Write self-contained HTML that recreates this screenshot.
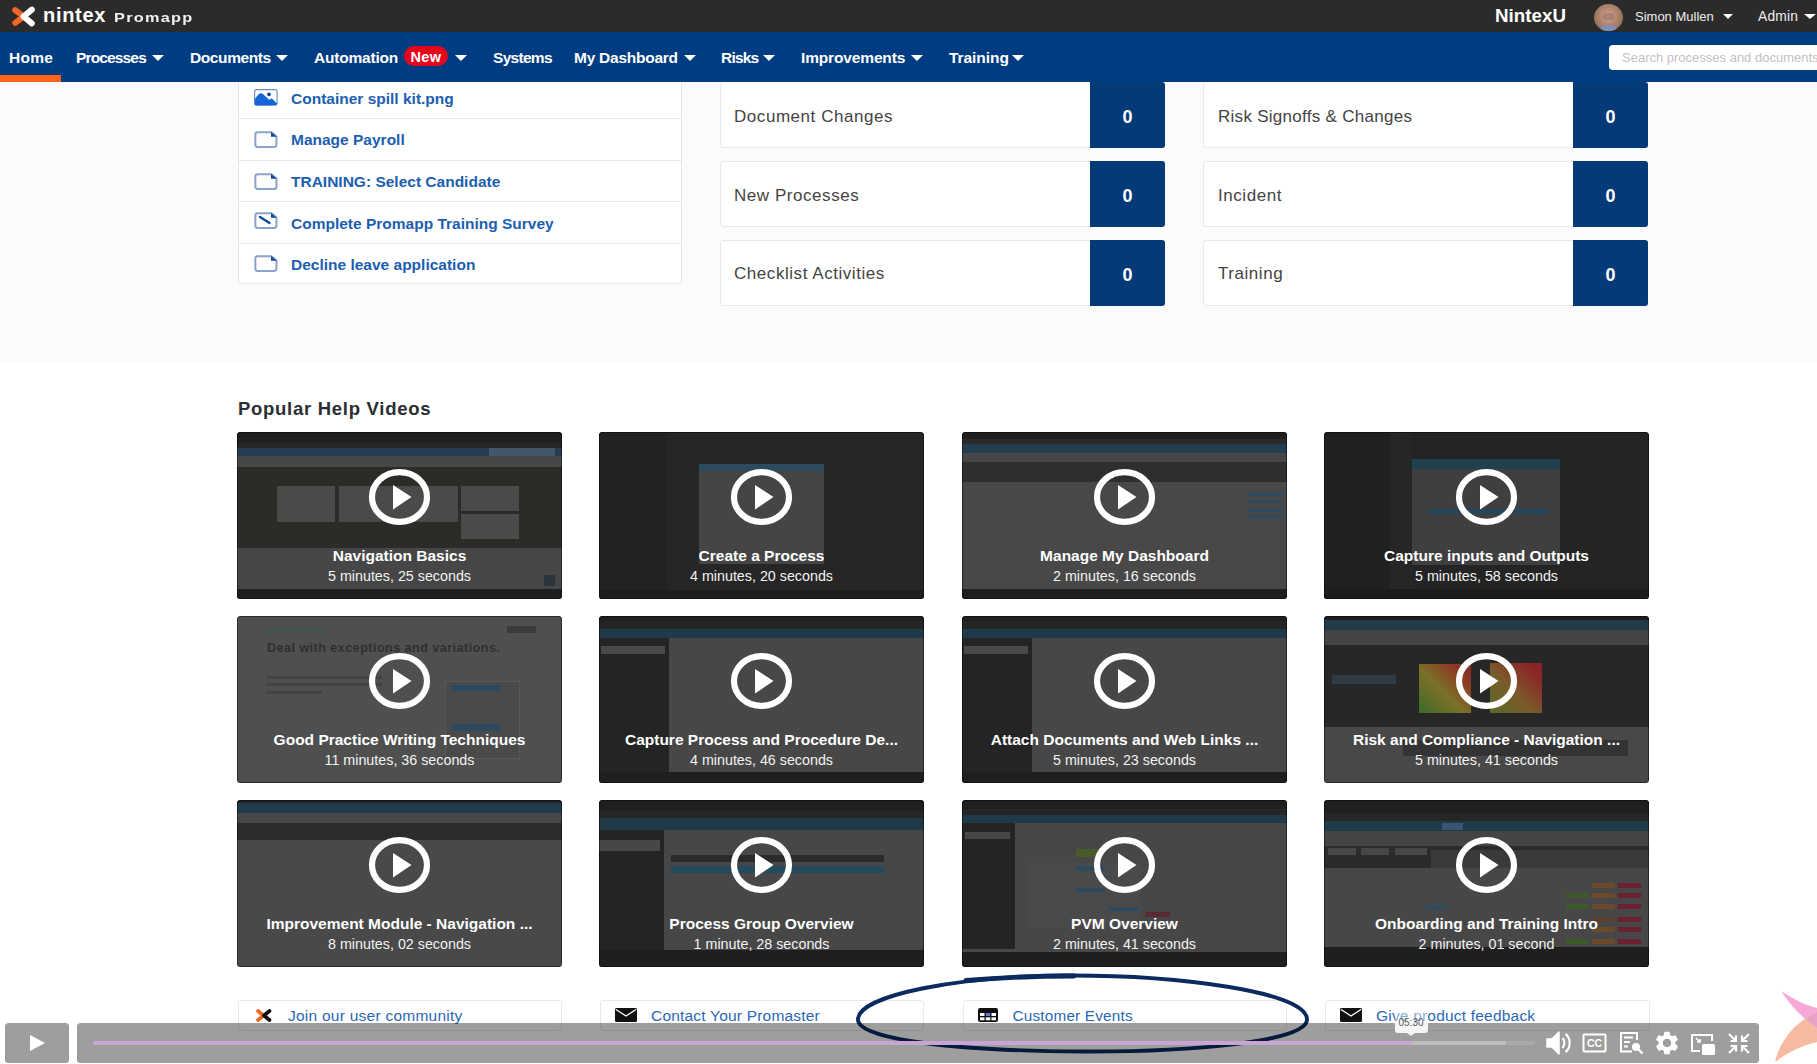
<!DOCTYPE html>
<html><head><meta charset="utf-8">
<style>
*{box-sizing:border-box}
html,body{margin:0;padding:0}
body{width:1817px;height:1064px;overflow:hidden;position:relative;background:#fff;font-family:"Liberation Sans",sans-serif}
.a{position:absolute}
.t{position:absolute;white-space:nowrap;line-height:1}
#top{left:0;top:0;width:1817px;height:32px;background:#2b2b2b}
#nav{left:0;top:32px;width:1817px;height:50px;background:#003c82}
#upper{left:0;top:82px;width:1817px;height:280px;background:#fbfafc}
.nv{color:#fff;font-weight:bold;font-size:14.5px}
.car{position:absolute;width:0;height:0;border-left:6px solid transparent;border-right:6px solid transparent;border-top:6.5px solid #fff}
.list{left:238px;top:82px;width:444px;height:202px;background:#fff;border:1px solid #e6e6e9;border-top:none}
.row{position:absolute;left:238px;width:444px;height:1px;background:#e6e6e9}
.li{color:#1c5eb0;font-weight:bold;font-size:15.5px}
.card{position:absolute;width:445px;height:66px;background:#fff;border:1px solid #e9e7ea;border-radius:3px}
.cnt{position:absolute;right:-1px;top:-1px;width:75px;height:66px;background:#053a78;border-radius:0 3px 3px 0;color:#fff;font-weight:bold;font-size:18px;text-align:center;line-height:71px}
.ctx{color:#444;font-size:17px;letter-spacing:0.55px}
.vid{position:absolute;width:325px;height:167px;background:#2a2a2a;border-radius:3.5px;overflow:hidden}
.vid:after{content:"";position:absolute;left:0;top:0;right:0;bottom:0;border-radius:3.5px;box-shadow:inset 0 0 0 1px rgba(0,0,0,0.45)}
.vid .r{position:absolute}
.play{position:absolute;left:132px;top:38px;width:60px;height:55px}
.vt{position:absolute;left:0;width:325px;text-align:center;color:#fff;white-space:nowrap;line-height:1}
.vt1{top:115.5px;font-weight:bold;font-size:15.5px}
.vt2{top:137px;font-size:14.3px;color:#f2f2f2}
.lk{position:absolute;top:1000px;width:325px;height:40px;border:1px solid #ebe8ed;border-radius:3px;background:#fff}
.lkt{color:#2b67b5;font-size:15.5px}
</style></head>
<body>
<div id="top" class="a"></div>
<div id="nav" class="a"></div>
<div id="upper" class="a"></div>

<!-- logo -->
<svg class="a" style="left:11px;top:5px" width="26" height="23" viewBox="-1 -1 28 25">
  <path d="M3.5 4.5 L12.5 11.5 L3.5 18.5" fill="none" stroke="#f26522" stroke-width="6.5" stroke-linecap="round" stroke-linejoin="round"/>
  <path d="M21.5 4 L12.5 11.5 L21.5 19" fill="none" stroke="#fff" stroke-width="6.5" stroke-linecap="round" stroke-linejoin="round"/>
</svg>
<div class="t" style="left:43px;top:4.5px;color:#fff;font-weight:bold;font-size:20px;letter-spacing:0.7px">nintex</div>
<div class="t" style="left:114px;top:11px;color:#f2f2f2;font-weight:bold;font-size:13px;letter-spacing:1px;transform:scaleX(1.255);transform-origin:0 0">Promapp</div>
<!-- top right -->
<div class="t" style="left:1495px;top:7px;color:#fff;font-weight:bold;font-size:18.8px">NintexU</div>
<div class="a" style="left:1594px;top:3.5px;width:29px;height:27.5px;border-radius:50%;overflow:hidden;background:radial-gradient(ellipse at 50% 45%,#d2a898 0,#b88a74 35%,#a07a62 60%,#7a6458 85%,#504540 100%);filter:blur(0.4px)"><div class="a" style="left:9px;top:9px;width:11px;height:7px;border-radius:40%;background:rgba(110,80,70,0.35)"></div><div class="a" style="left:6px;top:21px;width:17px;height:9px;border-radius:50%;background:#7f90b8"></div></div>
<div class="t" style="left:1635px;top:10px;color:#eee;font-size:13px">Simon Mullen</div>
<div class="car" style="left:1723px;top:14px;border-left-width:5px;border-right-width:5px;border-top-width:5px"></div>
<div class="t" style="left:1758px;top:9.7px;color:#eee;font-size:13.8px;letter-spacing:0.2px">Admin</div>
<div class="car" style="left:1804px;top:14px;border-left-width:6px;border-right-width:6px;border-top-width:5px"></div>

<!-- nav -->
<div class="t nv" style="left:9px;top:50px;font-size:15.5px;letter-spacing:0.3px">Home</div>
<div class="a" style="left:0;top:75px;width:61px;height:7px;background:#ff6418"></div>
<div class="t nv" style="left:76px;top:50px;font-size:15.5px;letter-spacing:-0.85px">Processes</div>
<div class="car" style="left:152px;top:54.5px"></div>
<div class="t nv" style="left:190px;top:50px;font-size:15.5px;letter-spacing:-0.4px">Documents</div>
<div class="car" style="left:276px;top:54.5px"></div>
<div class="t nv" style="left:314px;top:50px;font-size:15.5px;letter-spacing:-0.2px">Automation</div>
<div class="a" style="left:404px;top:46px;width:44px;height:20px;border-radius:10px;background:#e4061a"></div>
<div class="t nv" style="left:410.5px;top:49.5px;font-size:14.5px;letter-spacing:0.3px">New</div>
<div class="car" style="left:455px;top:54.5px"></div>
<div class="t nv" style="left:493px;top:50px;font-size:15.5px;letter-spacing:-0.7px">Systems</div>
<div class="t nv" style="left:574px;top:50px;font-size:15.5px;letter-spacing:-0.25px">My Dashboard</div>
<div class="car" style="left:684px;top:54.5px"></div>
<div class="t nv" style="left:721px;top:50px;font-size:15.5px;letter-spacing:-0.8px">Risks</div>
<div class="car" style="left:763px;top:54.5px"></div>
<div class="t nv" style="left:801px;top:50px;font-size:15.5px;letter-spacing:-0.15px">Improvements</div>
<div class="car" style="left:911px;top:54.5px"></div>
<div class="t nv" style="left:949px;top:50px;font-size:15.5px;letter-spacing:-0.05px">Training</div>
<div class="car" style="left:1012px;top:54.5px"></div>
<div class="a" style="left:1609px;top:45px;width:220px;height:25px;background:#fff;border-radius:4px"></div>
<div class="t" style="left:1622px;top:50.5px;color:#c6c0c4;font-size:13px">Search processes and documents</div>

<!-- left list -->
<div class="a list"></div>
<div class="row" style="top:118px"></div>
<div class="row" style="top:160px"></div>
<div class="row" style="top:201px"></div>
<div class="row" style="top:243px"></div>

<svg class="a" style="left:254px;top:89px" width="24" height="17" viewBox="0 0 24 17"><rect x="0.6" y="0.6" width="22.5" height="15.6" rx="1.8" fill="#fff" stroke="#6d8fbf" stroke-width="1.2"/><path d="M0.8 10 L3.5 6.5 Q7 2 10.5 6.5 L15.5 11 Q17.2 8.5 19 10.5 L23 14.5 Q22.8 16.2 20.5 16.2 H2 Q0.8 16.2 0.8 15 Z" fill="#1466d6"/><circle cx="15" cy="5.3" r="1.9" fill="#1d4a8a"/></svg>
<div class="t li" style="left:291px;top:91px">Container spill kit.png</div>
<svg class="a" style="left:254px;top:130.5px" width="24" height="17" viewBox="0 0 24 17"><path d="M3.5 1.25 H17.5 L22.45 5.5 V13.8 Q22.45 15.95 20.3 15.95 H3.5 Q1.35 15.95 1.35 13.8 V3.4 Q1.35 1.25 3.5 1.25 Z" fill="none" stroke="#8aa2cc" stroke-width="2"/><path d="M17 1 L22.8 5.8 L17 5.8 Z" fill="#0b4aa0"/></svg>
<div class="t li" style="left:291px;top:132px">Manage Payroll</div>
<svg class="a" style="left:254px;top:172.5px" width="24" height="17" viewBox="0 0 24 17"><path d="M3.5 1.25 H17.5 L22.45 5.5 V13.8 Q22.45 15.95 20.3 15.95 H3.5 Q1.35 15.95 1.35 13.8 V3.4 Q1.35 1.25 3.5 1.25 Z" fill="none" stroke="#8aa2cc" stroke-width="2"/><path d="M17 1 L22.8 5.8 L17 5.8 Z" fill="#0b4aa0"/></svg>
<div class="t li" style="left:291px;top:174px">TRAINING: Select Candidate</div>
<svg class="a" style="left:254px;top:212px" width="24" height="17" viewBox="0 0 24 17"><path d="M3.5 1.25 H17.5 L22.45 5.5 V13.8 Q22.45 15.95 20.3 15.95 H3.5 Q1.35 15.95 1.35 13.8 V3.4 Q1.35 1.25 3.5 1.25 Z" fill="none" stroke="#8aa2cc" stroke-width="2"/><path d="M17 1 L22.8 5.8 L17 5.8 Z" fill="#0b4aa0"/><path d="M6 5 L15.5 11" stroke="#0d4a9a" stroke-width="2.4" stroke-linecap="round"/></svg>
<div class="t li" style="left:291px;top:216px">Complete Promapp Training Survey</div>
<svg class="a" style="left:254px;top:255px" width="24" height="17" viewBox="0 0 24 17"><path d="M3.5 1.25 H17.5 L22.45 5.5 V13.8 Q22.45 15.95 20.3 15.95 H3.5 Q1.35 15.95 1.35 13.8 V3.4 Q1.35 1.25 3.5 1.25 Z" fill="none" stroke="#8aa2cc" stroke-width="2"/><path d="M17 1 L22.8 5.8 L17 5.8 Z" fill="#0b4aa0"/></svg>
<div class="t li" style="left:291px;top:257px">Decline leave application</div>

<!-- middle cards -->
<div class="card" style="left:720px;top:82px;border-top:none;height:66px"><div class="cnt" style="top:0;height:66px">0</div></div>
<div class="t ctx" style="left:734px;top:107.5px">Document Changes</div>
<div class="card" style="left:720px;top:161px"><div class="cnt">0</div></div>
<div class="t ctx" style="left:734px;top:186.5px">New Processes</div>
<div class="card" style="left:720px;top:240px"><div class="cnt">0</div></div>
<div class="t ctx" style="left:734px;top:265px">Checklist Activities</div>

<div class="card" style="left:1203px;top:82px;border-top:none;height:66px"><div class="cnt" style="top:0;height:66px">0</div></div>
<div class="t ctx" style="left:1218px;top:107.5px;letter-spacing:0.28px">Risk Signoffs &amp; Changes</div>
<div class="card" style="left:1203px;top:161px"><div class="cnt">0</div></div>
<div class="t ctx" style="left:1218px;top:186.5px">Incident</div>
<div class="card" style="left:1203px;top:240px"><div class="cnt">0</div></div>
<div class="t ctx" style="left:1218px;top:265px">Training</div>

<!-- help videos -->
<div class="t" style="left:238px;top:400px;color:#2b2e33;font-weight:bold;font-size:18.5px;letter-spacing:0.72px">Popular Help Videos</div>


<!--BOTTOM-->
<div class="lk" style="left:238px;width:324px;height:31px"></div>
<svg class="a" style="left:255px;top:1008px" width="18" height="15" viewBox="0 0 18 15"><path d="M3 3 L8.5 7.5 L3 12" fill="none" stroke="#f26522" stroke-width="3.6" stroke-linecap="round" stroke-linejoin="round"/><path d="M14.5 3 L9 7.5 L14.5 12" fill="none" stroke="#111" stroke-width="3.6" stroke-linecap="round" stroke-linejoin="round"/></svg>
<div class="t lkt" style="left:288px;top:1008px;font-size:15.5px;letter-spacing:0.25px">Join our user community</div>
<div class="lk" style="left:600px;width:324px;height:31px"></div>
<svg class="a" style="left:615px;top:1008px" width="22" height="14" viewBox="0 0 22 14"><rect x="0" y="0" width="22" height="14" rx="1.5" fill="#111"/><path d="M1 1.5 L11 8 L21 1.5" fill="none" stroke="#fff" stroke-width="1.4"/></svg>
<div class="t lkt" style="left:651px;top:1008px;font-size:15.5px;letter-spacing:0.2px">Contact Your Promaster</div>
<div class="lk" style="left:963px;width:324px;height:31px"></div>
<svg class="a" style="left:978px;top:1008px" width="20" height="14" viewBox="0 0 20 14"><rect x="0" y="0" width="20" height="14" rx="2" fill="#111"/><rect x="2" y="5" width="4.5" height="3" fill="#fff"/><rect x="7.8" y="5" width="4.5" height="3" fill="#5a7fd0"/><rect x="13.5" y="5" width="4.5" height="3" fill="#fff"/><rect x="2" y="9.3" width="4.5" height="3" fill="#fff"/><rect x="7.8" y="9.3" width="4.5" height="3" fill="#fff"/><rect x="13.5" y="9.3" width="4.5" height="3" fill="#fff"/></svg>
<div class="t lkt" style="left:1012.5px;top:1008px;font-size:15.3px;letter-spacing:0.2px">Customer Events</div>
<div class="lk" style="left:1325px;width:325px;height:31px"></div>
<svg class="a" style="left:1340px;top:1008px" width="22" height="14" viewBox="0 0 22 14"><rect x="0" y="0" width="22" height="14" rx="1.5" fill="#111"/><path d="M1 1.5 L11 8 L21 1.5" fill="none" stroke="#fff" stroke-width="1.4"/></svg>
<div class="t lkt" style="left:1376px;top:1008px;font-size:15.5px;letter-spacing:0.2px">Give product feedback</div>

<!-- ellipse annotation -->
<svg class="a" style="left:840px;top:965px" width="480" height="95" viewBox="840 965 480 95">
  <path d="M858 1019.5 C 858 995, 960 976, 1065 975.5 C 1180 975, 1307 992, 1307 1019.4 C 1307 1042, 1190 1052, 1082 1051.5 C 960 1051, 858 1040, 858 1019.5 Z" fill="none" stroke="#0a2a60" stroke-width="3.9"/>
  <path d="M966 980.5 C 1000 977.5, 1040 976, 1074 976" fill="none" stroke="#0a2a60" stroke-width="4.8" stroke-linecap="round"/>
</svg>

<!-- player controls -->
<div class="a" style="left:5px;top:1023px;width:64px;height:40px;border-radius:3.5px;background:rgba(0,0,0,0.38)"></div>
<svg class="a" style="left:29px;top:1034px" width="18" height="18" viewBox="0 0 18 18"><path d="M1 1 L1 17 L16 9Z" fill="#fff"/></svg>
<div class="a" style="left:77px;top:1023px;width:1682px;height:40px;border-radius:3.5px;background:rgba(0,0,0,0.38)"></div>
<div class="a" style="left:93px;top:1041px;width:1442px;height:4px;border-radius:2px;background:#aaaaaa"></div>
<div class="a" style="left:93px;top:1041px;width:1413px;height:4px;border-radius:2px 0 0 2px;background:#bdbdbd"></div>
<div class="a" style="left:93px;top:1041px;width:1319px;height:4px;border-radius:2px 0 0 2px;background:#c9a5d6"></div>
<div class="a" style="left:1395px;top:1023px;width:33px;height:10px;border-radius:0 0 3px 3px;background:rgba(255,255,255,0.9)"></div><div class="a" style="left:1395px;top:1012px;width:33px;height:11px;border-radius:3px 3px 0 0;background:rgba(255,255,255,0.45)"></div>
<svg class="a" style="left:1407px;top:1033px" width="8" height="3" viewBox="0 0 8 3"><path d="M0 0 L8 0 L4 3Z" fill="rgba(255,255,255,0.85)"/></svg>
<div class="t" style="left:1398.5px;top:1018px;font-size:10px;color:#5a5a5a">05:30</div>

<!-- icons -->
<svg class="a" style="left:1545px;top:1030px" width="28" height="26" viewBox="0 0 28 26">
  <path d="M2 9 H7 L14 2 V24 L7 17 H2 Z" fill="#fff" stroke="#fff" stroke-width="1.5" stroke-linejoin="round"/>
  <path d="M17.5 8 C 20 10.5, 20 15.5, 17.5 18" fill="none" stroke="#fff" stroke-width="2.2"/>
  <path d="M20.5 4 C 26 8, 26 18, 20.5 22" fill="none" stroke="#fff" stroke-width="2.2"/>
</svg>
<svg class="a" style="left:1582px;top:1033px" width="26" height="20" viewBox="0 0 26 20">
  <rect x="1.5" y="1.5" width="22" height="17" rx="1" fill="none" stroke="#fff" stroke-width="2"/>
  <text x="12.5" y="14.3" text-anchor="middle" font-family="Liberation Sans" font-weight="bold" font-size="10.5" fill="#fff">CC</text>
</svg>
<svg class="a" style="left:1619px;top:1031px" width="26" height="25" viewBox="0 0 26 25">
  <path d="M13 20.5 H2 V2 H18 V9" fill="none" stroke="#fff" stroke-width="2"/>
  <rect x="5" y="5.5" width="9" height="2" fill="#fff"/><rect x="5" y="10" width="6" height="2" fill="#fff"/><rect x="5" y="14.5" width="4" height="2" fill="#fff"/>
  <circle cx="17" cy="16" r="4" fill="#fff"/><path d="M19.5 18.5 L23.5 22.5" stroke="#fff" stroke-width="2.2"/>
</svg>
<svg class="a" style="left:1653px;top:1029px" width="28" height="28" viewBox="0 0 24 24">
  <path fill="#fff" d="M19.14 12.94c.04-.3.06-.61.06-.94 0-.32-.02-.64-.07-.94l2.03-1.58c.18-.14.23-.41.12-.61l-1.92-3.32c-.12-.22-.37-.29-.59-.22l-2.39.96c-.5-.38-1.03-.7-1.62-.94l-.36-2.54c-.04-.24-.24-.41-.48-.41h-3.84c-.24 0-.43.17-.47.41l-.36 2.54c-.59.24-1.13.57-1.62.94l-2.39-.96c-.22-.08-.47 0-.59.22L2.74 8.87c-.12.21-.08.47.12.61l2.03 1.58c-.05.3-.09.63-.09.94s.02.64.07.94l-2.03 1.58c-.18.14-.23.41-.12.61l1.92 3.32c.12.22.37.29.59.22l2.39-.96c.5.38 1.03.7 1.62.94l.36 2.54c.05.24.24.41.48.41h3.84c.24 0 .44-.17.47-.41l.36-2.54c.59-.24 1.13-.56 1.62-.94l2.39.96c.22.08.47 0 .59-.22l1.92-3.32c.12-.22.07-.47-.12-.61l-2.01-1.58zM12 15.6c-1.98 0-3.6-1.62-3.6-3.6s1.62-3.6 3.6-3.6 3.6 1.62 3.6 3.6-1.62 3.6-3.6 3.6z"/>
</svg>
<svg class="a" style="left:1690px;top:1033px" width="27" height="23" viewBox="0 0 27 23">
  <path d="M10 18 H2 V2 H22 V8" fill="none" stroke="#fff" stroke-width="2"/>
  <rect x="12" y="11" width="13" height="11" rx="1.5" fill="#fff"/>
  <path d="M6 5 L10 9 M10 6 V9 H7" fill="none" stroke="#fff" stroke-width="1.6"/>
</svg>
<svg class="a" style="left:1727px;top:1032px" width="24" height="23" viewBox="0 0 24 23">
  <path d="M2 2 L9 9 M9 3.5 V9 H3.5" fill="none" stroke="#fff" stroke-width="2.2"/>
  <path d="M22 2 L15 9 M15 3.5 V9 H20.5" fill="none" stroke="#fff" stroke-width="2.2"/>
  <path d="M2 21 L9 14 M9 19.5 V14 H3.5" fill="none" stroke="#fff" stroke-width="2.2"/>
  <path d="M22 21 L15 14 M15 19.5 V14 H20.5" fill="none" stroke="#fff" stroke-width="2.2"/>
</svg>

<!-- petal logo -->
<svg class="a" style="left:1770px;top:985px" width="47" height="79" viewBox="1770 985 47 79">
  <path d="M1781 991 C 1795 1000, 1805 1005, 1817 1008 L 1817 1028 C 1805 1020, 1792 1008, 1781 991Z" fill="#f7a8d6"/>
  <path d="M1775 1062 C 1780 1040, 1795 1022, 1817 1012 L 1817 1042 C 1800 1046, 1787 1053, 1775 1062Z" fill="#f6bba0"/>
  <path d="M1806 1019.5 C 1810 1016, 1813 1014, 1817 1012 L 1817 1028 C 1813 1025, 1809 1022, 1806 1019.5Z" fill="#e8a2c8"/>
</svg>
<!--/BOTTOM-->







<!--VIDS-->
<div class="vid" style="left:237px;top:432px;background:#2b2c28"><div class="r" style="left:0px;top:0px;width:325px;height:11px;background:#1f1f1f;"></div><div class="r" style="left:0px;top:11px;width:325px;height:5px;background:#262626;"></div><div class="r" style="left:0px;top:16px;width:325px;height:8px;background:#263c50;"></div><div class="r" style="left:252px;top:16px;width:66px;height:8px;background:#45566a;"></div><div class="r" style="left:0px;top:24px;width:325px;height:11px;background:#474747;"></div><div class="r" style="left:40px;top:54px;width:58px;height:36px;background:#4a4a4a;"></div><div class="r" style="left:102px;top:54px;width:119px;height:36px;background:#4a4a4a;"></div><div class="r" style="left:224px;top:54px;width:58px;height:25px;background:#4a4a4a;"></div><div class="r" style="left:224px;top:82px;width:58px;height:25px;background:#4a4a4a;"></div><div class="r" style="left:0px;top:116px;width:325px;height:41px;background:#464646;"></div><div class="r" style="left:0px;top:157px;width:325px;height:10px;background:#1f1f1f;"></div><div class="r" style="left:307px;top:143px;width:11px;height:11px;background:#2a3540;"></div><svg class="r" style="left:0;top:0" width="325" height="167"><ellipse cx="162.5" cy="65" rx="27.5" ry="24.9" fill="none" stroke="#fff" stroke-width="6.2"/><path d="M156 53 L156 77.5 L174.5 65 Z" fill="#fff"/></svg><div class="vt vt1">Navigation Basics</div><div class="vt vt2">5 minutes, 25 seconds</div></div>
<div class="vid" style="left:599px;top:432px;background:#262626"><div class="r" style="left:0px;top:0px;width:68px;height:167px;background:#222;"></div><div class="r" style="left:100px;top:32px;width:125px;height:100px;background:#454545;"></div><div class="r" style="left:100px;top:32px;width:125px;height:7px;background:#2a4a5e;"></div><div class="r" style="left:0px;top:158px;width:325px;height:9px;background:#1e1e1e;"></div><svg class="r" style="left:0;top:0" width="325" height="167"><ellipse cx="162.5" cy="65" rx="27.5" ry="24.9" fill="none" stroke="#fff" stroke-width="6.2"/><path d="M156 53 L156 77.5 L174.5 65 Z" fill="#fff"/></svg><div class="vt vt1">Create a Process</div><div class="vt vt2">4 minutes, 20 seconds</div></div>
<div class="vid" style="left:962px;top:432px;background:#484848"><div class="r" style="left:0px;top:0px;width:325px;height:7px;background:#1f1f1f;"></div><div class="r" style="left:0px;top:7px;width:325px;height:5px;background:#2a2a2a;"></div><div class="r" style="left:0px;top:12px;width:325px;height:9px;background:#243e50;"></div><div class="r" style="left:0px;top:21px;width:325px;height:9px;background:#474747;"></div><div class="r" style="left:0px;top:30px;width:325px;height:20px;background:#2e2e2e;"></div><div class="r" style="left:286px;top:61px;width:34px;height:3px;background:#2e4a60;"></div><div class="r" style="left:286px;top:68px;width:34px;height:3px;background:#2e4a60;"></div><div class="r" style="left:286px;top:77px;width:34px;height:3px;background:#2e4a60;"></div><div class="r" style="left:286px;top:83px;width:34px;height:3px;background:#2e4a60;"></div><div class="r" style="left:0px;top:157px;width:325px;height:10px;background:#1f1f1f;"></div><svg class="r" style="left:0;top:0" width="325" height="167"><ellipse cx="162.5" cy="65" rx="27.5" ry="24.9" fill="none" stroke="#fff" stroke-width="6.2"/><path d="M156 53 L156 77.5 L174.5 65 Z" fill="#fff"/></svg><div class="vt vt1">Manage My Dashboard</div><div class="vt vt2">2 minutes, 16 seconds</div></div>
<div class="vid" style="left:1324px;top:432px;background:#242424"><div class="r" style="left:0px;top:0px;width:66px;height:167px;background:#202020;"></div><div class="r" style="left:66px;top:0px;width:22px;height:167px;background:#262626;"></div><div class="r" style="left:88px;top:27px;width:148px;height:106px;background:#3f3f3f;"></div><div class="r" style="left:88px;top:27px;width:148px;height:10px;background:#21404e;"></div><div class="r" style="left:104px;top:77px;width:121px;height:5px;background:#24475a;"></div><div class="r" style="left:0px;top:157px;width:325px;height:10px;background:#1c1c1c;"></div><svg class="r" style="left:0;top:0" width="325" height="167"><ellipse cx="162.5" cy="65" rx="27.5" ry="24.9" fill="none" stroke="#fff" stroke-width="6.2"/><path d="M156 53 L156 77.5 L174.5 65 Z" fill="#fff"/></svg><div class="vt vt1">Capture inputs and Outputs</div><div class="vt vt2">5 minutes, 58 seconds</div></div>
<div class="vid" style="left:237px;top:616px;background:#4f4f4f"><div class="r" style="left:29px;top:13px;width:57px;height:3px;background:#3f5550;"></div><div class="r" style="left:208px;top:65px;width:75px;height:78px;background:#4a4a4a;border:1px solid #575757"></div><div class="r" style="left:214px;top:69px;width:50px;height:6px;background:#2e4a5e;"></div><div class="r" style="left:214px;top:108px;width:50px;height:7px;background:#2e4a5e;"></div><div class="r" style="left:270px;top:10px;width:29px;height:7px;background:#3a3a3a;"></div><div class="r" style="left:30px;top:25px;font:bold 12.5px 'Liberation Sans';letter-spacing:0.5px;color:#2f2f2f;white-space:nowrap">Deal with exceptions and variations.</div><div class="r" style="left:30px;top:60px;width:115px;height:3px;background:#434343;"></div><div class="r" style="left:30px;top:67px;width:115px;height:3px;background:#434343;"></div><div class="r" style="left:30px;top:75px;width:55px;height:3px;background:#434343;"></div><svg class="r" style="left:0;top:0" width="325" height="167"><ellipse cx="162.5" cy="65" rx="27.5" ry="24.9" fill="none" stroke="#fff" stroke-width="6.2"/><path d="M156 53 L156 77.5 L174.5 65 Z" fill="#fff"/></svg><div class="vt vt1">Good Practice Writing Techniques</div><div class="vt vt2">11 minutes, 36 seconds</div></div>
<div class="vid" style="left:599px;top:616px;background:#474747"><div class="r" style="left:0px;top:0px;width:325px;height:5px;background:#1f1f1f;"></div><div class="r" style="left:0px;top:5px;width:325px;height:8px;background:#252525;"></div><div class="r" style="left:0px;top:13px;width:325px;height:9px;background:#1f3a4a;"></div><div class="r" style="left:0px;top:22px;width:70px;height:134px;background:#242424;"></div><div class="r" style="left:2px;top:30px;width:64px;height:8px;background:#4a4a4a;"></div><div class="r" style="left:0px;top:156px;width:325px;height:11px;background:#1f1f1f;"></div><svg class="r" style="left:0;top:0" width="325" height="167"><ellipse cx="162.5" cy="65" rx="27.5" ry="24.9" fill="none" stroke="#fff" stroke-width="6.2"/><path d="M156 53 L156 77.5 L174.5 65 Z" fill="#fff"/></svg><div class="vt vt1">Capture Process and Procedure De...</div><div class="vt vt2">4 minutes, 46 seconds</div></div>
<div class="vid" style="left:962px;top:616px;background:#474747"><div class="r" style="left:0px;top:0px;width:325px;height:5px;background:#1f1f1f;"></div><div class="r" style="left:0px;top:5px;width:325px;height:8px;background:#252525;"></div><div class="r" style="left:0px;top:13px;width:325px;height:9px;background:#1f3a4a;"></div><div class="r" style="left:0px;top:22px;width:70px;height:134px;background:#242424;"></div><div class="r" style="left:2px;top:30px;width:64px;height:8px;background:#4a4a4a;"></div><div class="r" style="left:0px;top:156px;width:325px;height:11px;background:#1f1f1f;"></div><svg class="r" style="left:0;top:0" width="325" height="167"><ellipse cx="162.5" cy="65" rx="27.5" ry="24.9" fill="none" stroke="#fff" stroke-width="6.2"/><path d="M156 53 L156 77.5 L174.5 65 Z" fill="#fff"/></svg><div class="vt vt1">Attach Documents and Web Links ...</div><div class="vt vt2">5 minutes, 23 seconds</div></div>
<div class="vid" style="left:1324px;top:616px;background:#484848"><div class="r" style="left:0px;top:0px;width:325px;height:4px;background:#1e1e1e;"></div><div class="r" style="left:0px;top:4px;width:325px;height:10px;background:#213b48;"></div><div class="r" style="left:0px;top:14px;width:325px;height:15px;background:#444;"></div><div class="r" style="left:0px;top:29px;width:325px;height:82px;background:#272727;"></div><div class="r" style="left:8px;top:59px;width:64px;height:9px;background:#2e3a44;"></div><div class="r" style="left:95px;top:48px;width:52px;height:49px;background:linear-gradient(45deg,#3f6a2a 0%,#7a7028 45%,#8a4024 75%,#8a2424 100%)"></div><div class="r" style="left:166px;top:47px;width:52px;height:50px;background:linear-gradient(45deg,#5a6a28 0%,#7a5a2a 45%,#8a2a28 80%,#8a1e28 100%)"></div><div class="r" style="left:79px;top:124px;width:225px;height:16px;background:#333;"></div><svg class="r" style="left:0;top:0" width="325" height="167"><ellipse cx="162.5" cy="65" rx="27.5" ry="24.9" fill="none" stroke="#fff" stroke-width="6.2"/><path d="M156 53 L156 77.5 L174.5 65 Z" fill="#fff"/></svg><div class="vt vt1">Risk and Compliance - Navigation ...</div><div class="vt vt2">5 minutes, 41 seconds</div></div>
<div class="vid" style="left:237px;top:800px;background:#494949"><div class="r" style="left:0px;top:0px;width:325px;height:3px;background:#222;"></div><div class="r" style="left:0px;top:3px;width:325px;height:10px;background:#203b4a;"></div><div class="r" style="left:0px;top:13px;width:325px;height:10px;background:#474747;"></div><div class="r" style="left:0px;top:23px;width:325px;height:17px;background:#2c2c2c;"></div><svg class="r" style="left:0;top:0" width="325" height="167"><ellipse cx="162.5" cy="65" rx="27.5" ry="24.9" fill="none" stroke="#fff" stroke-width="6.2"/><path d="M156 53 L156 77.5 L174.5 65 Z" fill="#fff"/></svg><div class="vt vt1">Improvement Module - Navigation ...</div><div class="vt vt2">8 minutes, 02 seconds</div></div>
<div class="vid" style="left:599px;top:800px;background:#474747"><div class="r" style="left:0px;top:0px;width:325px;height:11px;background:#1f1f1f;"></div><div class="r" style="left:0px;top:11px;width:325px;height:7px;background:#262626;"></div><div class="r" style="left:0px;top:18px;width:325px;height:12px;background:#1f3a48;"></div><div class="r" style="left:0px;top:30px;width:65px;height:120px;background:#242424;"></div><div class="r" style="left:0px;top:40px;width:61px;height:11px;background:#474747;"></div><div class="r" style="left:72px;top:55px;width:213px;height:7px;background:#2a2a2a;"></div><div class="r" style="left:72px;top:66px;width:213px;height:7px;background:#234a5e;"></div><div class="r" style="left:0px;top:150px;width:325px;height:17px;background:#1f1f1f;"></div><svg class="r" style="left:0;top:0" width="325" height="167"><ellipse cx="162.5" cy="65" rx="27.5" ry="24.9" fill="none" stroke="#fff" stroke-width="6.2"/><path d="M156 53 L156 77.5 L174.5 65 Z" fill="#fff"/></svg><div class="vt vt1">Process Group Overview</div><div class="vt vt2">1 minute, 28 seconds</div></div>
<div class="vid" style="left:962px;top:800px;background:#474747"><div class="r" style="left:0px;top:0px;width:325px;height:9px;background:#1f1f1f;"></div><div class="r" style="left:0px;top:9px;width:325px;height:6px;background:#262626;"></div><div class="r" style="left:0px;top:15px;width:325px;height:8px;background:#1f3a48;"></div><div class="r" style="left:0px;top:23px;width:53px;height:126px;background:#242424;"></div><div class="r" style="left:3px;top:32px;width:45px;height:7px;background:#474747;"></div><div class="r" style="left:66px;top:63px;width:113px;height:64px;background:#4a4a4a;"></div><div class="r" style="left:114px;top:49px;width:22px;height:8px;background:#4a5a2a;"></div><div class="r" style="left:114px;top:66px;width:29px;height:5px;background:#2e4a5e;"></div><div class="r" style="left:114px;top:88px;width:29px;height:4px;background:#2e4a5e;"></div><div class="r" style="left:147px;top:107px;width:30px;height:4px;background:#2e4a5e;"></div><div class="r" style="left:183px;top:112px;width:25px;height:5px;background:#5a2a30;"></div><div class="r" style="left:0px;top:152px;width:325px;height:15px;background:#1f1f1f;"></div><svg class="r" style="left:0;top:0" width="325" height="167"><ellipse cx="162.5" cy="65" rx="27.5" ry="24.9" fill="none" stroke="#fff" stroke-width="6.2"/><path d="M156 53 L156 77.5 L174.5 65 Z" fill="#fff"/></svg><div class="vt vt1">PVM Overview</div><div class="vt vt2">2 minutes, 41 seconds</div></div>
<div class="vid" style="left:1324px;top:800px;background:#474747"><div class="r" style="left:0px;top:0px;width:325px;height:13px;background:#1f1f1f;"></div><div class="r" style="left:0px;top:13px;width:325px;height:8px;background:#262626;"></div><div class="r" style="left:0px;top:21px;width:325px;height:10px;background:#1f3a48;"></div><div class="r" style="left:118px;top:23px;width:21px;height:7px;background:#3a5570;"></div><div class="r" style="left:0px;top:31px;width:325px;height:15px;background:#444;"></div><div class="r" style="left:0px;top:46px;width:325px;height:22px;background:#2b2b2b;"></div><div class="r" style="left:4px;top:48px;width:28px;height:7px;background:#474747;"></div><div class="r" style="left:37px;top:48px;width:28px;height:7px;background:#474747;"></div><div class="r" style="left:71px;top:48px;width:32px;height:7px;background:#474747;"></div><div class="r" style="left:107px;top:50px;width:218px;height:18px;background:#3a3a3a;"></div><div class="r" style="left:268px;top:83px;width:23px;height:5px;background:#6a4a2a;"></div><div class="r" style="left:294px;top:83px;width:23px;height:5px;background:#6a2030;"></div><div class="r" style="left:242px;top:93px;width:23px;height:5px;background:#3e5a2a;"></div><div class="r" style="left:268px;top:93px;width:23px;height:5px;background:#6a4a2a;"></div><div class="r" style="left:294px;top:93px;width:23px;height:5px;background:#6a2030;"></div><div class="r" style="left:242px;top:104px;width:23px;height:5px;background:#3e5a2a;"></div><div class="r" style="left:268px;top:104px;width:23px;height:5px;background:#6a4a2a;"></div><div class="r" style="left:294px;top:104px;width:23px;height:5px;background:#6a2030;"></div><div class="r" style="left:102px;top:105px;width:21px;height:4px;background:#2e4a5e;"></div><div class="r" style="left:268px;top:117px;width:23px;height:5px;background:#5a4030;"></div><div class="r" style="left:294px;top:117px;width:23px;height:5px;background:#6a2030;"></div><div class="r" style="left:268px;top:127px;width:23px;height:5px;background:#6a4a2a;"></div><div class="r" style="left:294px;top:127px;width:23px;height:5px;background:#6a2030;"></div><div class="r" style="left:242px;top:139px;width:23px;height:5px;background:#3e5a2a;"></div><div class="r" style="left:268px;top:139px;width:23px;height:5px;background:#6a4a2a;"></div><div class="r" style="left:294px;top:139px;width:23px;height:5px;background:#6a2030;"></div><div class="r" style="left:0px;top:147px;width:325px;height:20px;background:#1f1f1f;"></div><svg class="r" style="left:0;top:0" width="325" height="167"><ellipse cx="162.5" cy="65" rx="27.5" ry="24.9" fill="none" stroke="#fff" stroke-width="6.2"/><path d="M156 53 L156 77.5 L174.5 65 Z" fill="#fff"/></svg><div class="vt vt1">Onboarding and Training Intro</div><div class="vt vt2">2 minutes, 01 second</div></div>
<!--/VIDS-->
</body></html>
